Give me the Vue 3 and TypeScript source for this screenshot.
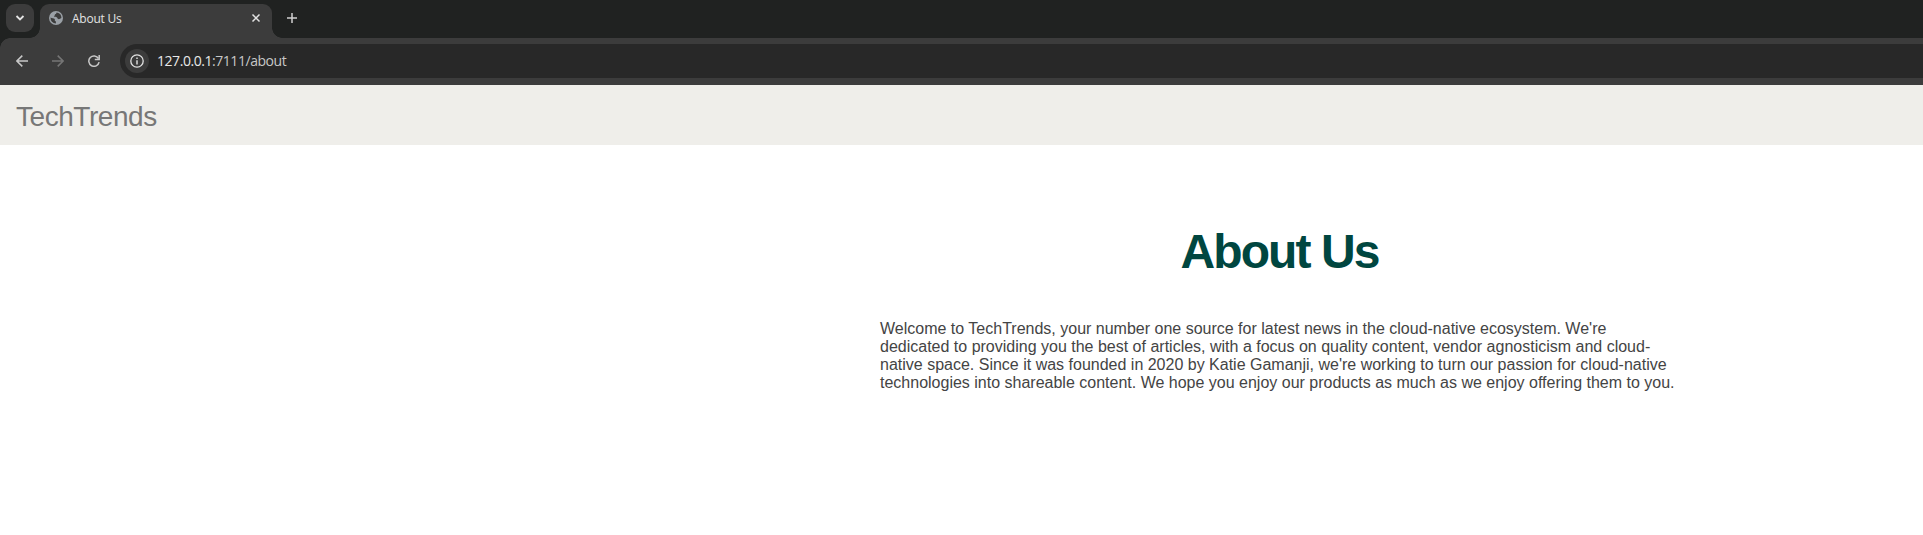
<script setup lang="ts">
const tabTitle = 'About Us'
const host = '127.0.0.1'
const path = ':7111/about'
const paragraph: string[] = [
  "Welcome to TechTrends, your number one source for latest news in the cloud-native ecosystem. We're",
  'dedicated to providing you the best of articles, with a focus on quality content, vendor agnosticism and cloud-',
  "native space. Since it was founded in 2020 by Katie Gamanji, we're working to turn our passion for cloud-native",
  'technologies into shareable content. We hope you enjoy our products as much as we enjoy offering them to you.',
]
</script>

<template>
  <div class="window">
    <div class="tab-strip">
      <button class="tab-search" aria-label="Search tabs">
        <svg width="10" height="8" viewBox="0 0 10 8"><path d="M1.5 2 5 5.5 8.5 2" fill="none" stroke="#e3e3e3" stroke-width="1.8" /></svg>
      </button>
      <div class="tab">
        <svg class="globe" width="14" height="14" viewBox="0 0 14 14">
          <circle cx="7" cy="7" r="7" fill="#9aa0a6" />
          <path d="M7.9 1.5c-.6.3-.9.8-.7 1.5-.8 0-1.5.5-1.5 1.3 0 .6-.4.9-.9 1 .9.8 2.3.6 3.2 1.1.8.5.5 1.5 1.3 1.7.9.2 2-.3 3.1-1.1A5.5 5.5 0 0 0 7.9 1.5ZM1.5 6.6C2.8 7.3 5 7.1 5.7 8.1c.4.7-.2 1.2.2 1.7.3.4 1 .3 1 .9v1.8A5.500 5.500 0 0 1 1.500 6.600Z" fill="#3c3c3c" />
        </svg>
        <span class="tab-title">{{ tabTitle }}</span>
        <svg class="close" width="10" height="10" viewBox="0 0 10 10"><path d="m1.5 1.5 7 7m0-7-7 7" stroke="#e3e3e3" stroke-width="1.5" /></svg>
      </div>
      <svg class="plus" width="10" height="10" viewBox="0 0 10 10"><path d="M5 0v10M0 5h10" stroke="#d0d0d0" stroke-width="1.5" /></svg>
    </div>

    <div class="toolbar">
      <svg class="nav" width="12" height="12" viewBox="0 0 12 12"><path d="M12 6H1M6.3.6.9 6l5.4 5.4" fill="none" stroke="#c7c7c7" stroke-width="1.5" /></svg>
      <svg class="nav" width="12" height="12" viewBox="0 0 12 12"><path d="M0 6h11M5.7.6 11.1 6l-5.4 5.4" fill="none" stroke="#757575" stroke-width="1.5" /></svg>
      <svg class="nav" width="12" height="12" viewBox="0 0 12 12">
        <path d="M10.5 3.5A5.2 5.2 0 1 0 11.1 7.2" fill="none" stroke="#c7c7c7" stroke-width="1.5" />
        <path d="M11.2 0v4.5H6.8" fill="none" stroke="#c7c7c7" stroke-width="1.5" />
      </svg>
      <div class="address">
        <span class="info">
          <svg width="14" height="14" viewBox="0 0 14 14">
            <circle cx="7" cy="7" r="6.2" fill="none" stroke="#e3e3e3" stroke-width="1.3" />
            <path d="M7 6.2V10.5M7 3.5V5" stroke="#e3e3e3" stroke-width="1.4" />
          </svg>
        </span>
        <span class="url"><span class="host">{{ host }}</span>{{ path }}</span>
      </div>
    </div>

    <header class="site-header"><span class="brand">TechTrends</span></header>

    <main class="content">
      <article class="about">
        <h1>About Us</h1>
        <p><span v-for="line in paragraph" :key="line" class="line">{{ line }}</span></p>
      </article>
    </main>
  </div>
</template>

<style>
body {
  margin: 0;
  background: #fff;
}
</style>

<style scoped>
.window {
  height: 535px;
  overflow: hidden;
  background: #fff;
  font-family: "Liberation Sans", Arial, sans-serif;
}
.tab-strip {
  display: flex;
  height: 38px;
  background: #202221;
}
.tab-search {
  display: flex;
  align-items: center;
  justify-content: center;
  width: 28px;
  height: 28px;
  margin: 4px 6px 0;
  padding: 0;
  border: 0;
  border-radius: 9px;
  background: #3c3c3c;
}
.tab {
  position: relative;
  display: flex;
  box-sizing: border-box;
  align-items: center;
  width: 232px;
  height: 34px;
  margin-top: 4px;
  padding: 0 11px 6px 9px;
  border-radius: 9px 9px 0 0;
  background: #3c3c3c;
}
.tab::before,
.tab::after {
  content: "";
  position: absolute;
  bottom: 0;
  width: 10px;
  height: 10px;
}
.tab::before {
  right: 100%;
  background: radial-gradient(circle at 0 0, transparent 9.5px, #3c3c3c 10px);
}
.tab::after {
  left: 100%;
  background: radial-gradient(circle at 100% 0, transparent 9.5px, #3c3c3c 10px);
}
.tab-title {
  flex: 1;
  margin: 2px 0 0 9px;
  color: #e3e3e3;
  font: 12px/16px "Open Sans", "Noto Sans", sans-serif;
  letter-spacing: -0.25px;
}
.plus {
  margin: 13px 0 0 15px;
}
.toolbar {
  display: flex;
  box-sizing: border-box;
  align-items: center;
  height: 47px;
  padding: 0 0 1px 16px;
  background: radial-gradient(circle at 10px 10px, #3c3c3c 9.5px, #202221 10px) 0 0 / 10px 10px no-repeat, #3c3c3c;
}
.nav {
  flex: none;
  margin-right: 24px;
}
.address {
  display: flex;
  flex: 1;
  box-sizing: border-box;
  align-items: center;
  height: 34px;
  margin-left: -4px;
  padding-left: 5px;
  border-radius: 17px 0 0 17px;
  background: #282828;
}
.info {
  display: flex;
  align-items: center;
  justify-content: center;
  width: 24px;
  height: 24px;
  border-radius: 50%;
  background: #3c3c3c;
}
.url {
  margin-left: 8px;
  color: #c7c7c7;
  font: 14px/20px "Open Sans", "Noto Sans", sans-serif;
  letter-spacing: -0.45px;
}
.host {
  color: #e8e8e8;
}
.site-header {
  display: flex;
  align-items: center;
  box-sizing: border-box;
  height: 60px;
  padding: 4px 16px 0;
  background: #efeeea;
}
.brand {
  color: #777;
  font-size: 28px;
  line-height: 32px;
  letter-spacing: -0.45px;
}
.content {
  display: flex;
  padding: 77px 0 0 880px;
}
.about {
  width: 799px;
}
h1 {
  margin: 0;
  color: #004640;
  font-size: 48px;
  line-height: 60px;
  letter-spacing: -0.04em;
  text-align: center;
}
p {
  margin: 38px 0 0;
  color: #444;
  font-size: 16px;
  line-height: 18px;
}
.line {
  display: block;
  white-space: nowrap;
}
</style>
